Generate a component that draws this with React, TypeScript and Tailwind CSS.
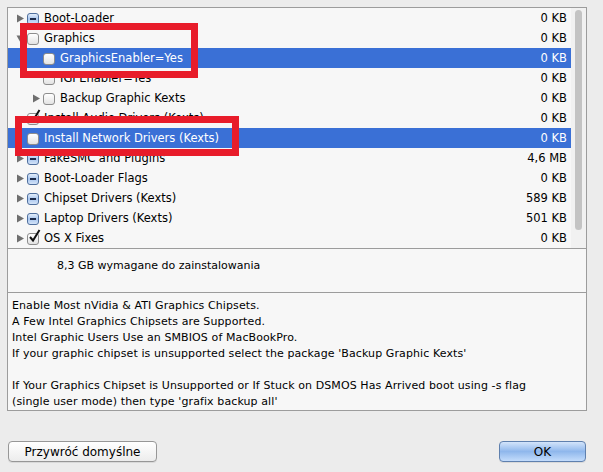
import React from "react";

type Check = "empty" | "mixed" | "checked";

type Row = {
  label: string;
  size: string;
  depth: number;
  arrow?: "right" | "down";
  check: Check;
  selected?: boolean;
};

const ROWS: Row[] = [
  { label: "Boot-Loader", size: "0 KB", depth: 0, arrow: "right", check: "mixed" },
  { label: "Graphics", size: "0 KB", depth: 0, arrow: "down", check: "empty" },
  { label: "GraphicsEnabler=Yes", size: "0 KB", depth: 1, check: "empty", selected: true },
  { label: "IGPEnabler=Yes", size: "0 KB", depth: 1, check: "empty" },
  { label: "Backup Graphic Kexts", size: "0 KB", depth: 1, arrow: "right", check: "empty" },
  { label: "Install Audio Drivers (Kexts)", size: "0 KB", depth: 0, check: "checked" },
  { label: "Install Network Drivers (Kexts)", size: "0 KB", depth: 0, check: "empty", selected: true },
  { label: "FakeSMC and Plugins", size: "4,6 MB", depth: 0, arrow: "right", check: "mixed" },
  { label: "Boot-Loader Flags", size: "0 KB", depth: 0, arrow: "right", check: "mixed" },
  { label: "Chipset Drivers (Kexts)", size: "589 KB", depth: 0, arrow: "right", check: "mixed" },
  { label: "Laptop Drivers (Kexts)", size: "501 KB", depth: 0, arrow: "right", check: "mixed" },
  { label: "OS X Fixes", size: "0 KB", depth: 0, arrow: "right", check: "checked" },
];

function Arrow({ dir }: { dir: "right" | "down" }) {
  return (
    <svg width="9" height="9" viewBox="0 0 9 9" className="shrink-0">
      {dir === "right" ? (
        <polygon points="1,0.5 8,4.5 1,8.5" fill="#6f6f6f" />
      ) : (
        <polygon points="0.5,1.5 8.5,1.5 4.5,8.5" fill="#6f6f6f" />
      )}
    </svg>
  );
}

function CheckBox({ state }: { state: Check }) {
  if (state === "mixed") {
    return (
      <span className="relative flex h-[12px] w-[12px] shrink-0 items-center justify-center rounded-[3px] border border-[#4f6f9e] bg-gradient-to-b from-[#e4eefb] via-[#a9c6ee] to-[#d3e3f8]">
        <span className="h-[2px] w-[6px] bg-[#1d2b4a]" />
      </span>
    );
  }
  return (
    <span className="relative flex h-[12px] w-[12px] shrink-0 rounded-[3px] border border-[#8d8d8d] bg-gradient-to-b from-[#ffffff] to-[#e3e3e3]">
      {state === "checked" && (
        <svg width="13" height="14" viewBox="0 0 13 14" className="absolute left-[0px] top-[-5px]">
          <path d="M2 8 L5 11.5 L11.5 1" stroke="#111" strokeWidth="2" fill="none" />
        </svg>
      )}
    </span>
  );
}

function ListRow({ row }: { row: Row }) {
  return (
    <div
      className={`flex h-[20px] items-center pr-[4px] pt-[1px] ${row.selected ? "bg-[#3a70d6] text-white" : "text-black"}`}
    >
      <div className="flex items-center" style={{ paddingLeft: 8 + row.depth * 16 }}>
        <span className="flex w-[11px] items-center">{row.arrow && <Arrow dir={row.arrow} />}</span>
        <CheckBox state={row.check} />
        <span className="ml-[5px] whitespace-nowrap">{row.label}</span>
      </div>
      <span className="ml-auto whitespace-nowrap">{row.size}</span>
    </div>
  );
}

export default function App() {
  return (
    <div className="relative h-[472px] w-[603px] overflow-hidden bg-[#ececec] font-['DejaVu_Sans',sans-serif] text-[11.5px] text-black">
      <div className="ml-[7px] mr-[16px] pt-[7px]">
        <div className="flex border border-[#9c9c9c] bg-[#f7f7f7]">
          <div className="flex-1">
            {ROWS.map((r) => (
              <ListRow key={r.label} row={r} />
            ))}
          </div>
          <div className="flex w-[15px] justify-center bg-[#f1f1f1] pt-[2px] pb-[18px]">
            <div className="w-[7px] rounded-full bg-[#c3c3c3]" />
          </div>
        </div>
        <div className="h-[44px] border-x border-b border-[#9c9c9c] bg-[#f7f7f7] pl-[49px] pt-[9px] text-[11px]">
          8,3 GB wymagane do zainstalowania
        </div>
        <div className="h-[118px] border-x border-b border-[#9c9c9c] bg-[#f7f7f7] px-[4px] pt-[5px] text-[11px] leading-[16px] tracking-[0.1px]">
          <p>Enable Most nVidia &amp; ATI Graphics Chipsets.</p>
          <p>A Few Intel Graphics Chipsets are Supported.</p>
          <p>Intel Graphic Users Use an SMBIOS of MacBookPro.</p>
          <p>If your graphic chipset is unsupported select the package 'Backup Graphic Kexts'</p>
          <p>&nbsp;</p>
          <p>If Your Graphics Chipset is Unsupported or If Stuck on DSMOS Has Arrived boot using -s flag</p>
          <p>(single user mode) then type 'grafix backup all'</p>
        </div>
      </div>

      <div className="mt-[30px] flex items-center justify-between pl-[8px] pr-[17px]">
        <button className="h-[21px] w-[149px] rounded-[4px] border border-[#979797] bg-gradient-to-b from-[#ffffff] to-[#ececec] text-[12px] shadow-[0_1px_0_rgba(0,0,0,0.08)]">
          Przywróć domyślne
        </button>
        <button className="h-[21px] w-[87px] rounded-[4px] border border-[#5f80ae] bg-gradient-to-b from-[#d3e4fa] via-[#8fb7ec] to-[#c3dcfb] text-[12px] shadow-[0_1px_0_rgba(0,0,0,0.08)]">
          OK
        </button>
      </div>

      <div className="pointer-events-none absolute left-[20px] top-[23px] h-[55px] w-[178px] border-[7px] border-[#e81c2a]" />
      <div className="pointer-events-none absolute left-[15px] top-[116px] h-[40px] w-[224px] border-[7px] border-[#e81c2a]" />
    </div>
  );
}
